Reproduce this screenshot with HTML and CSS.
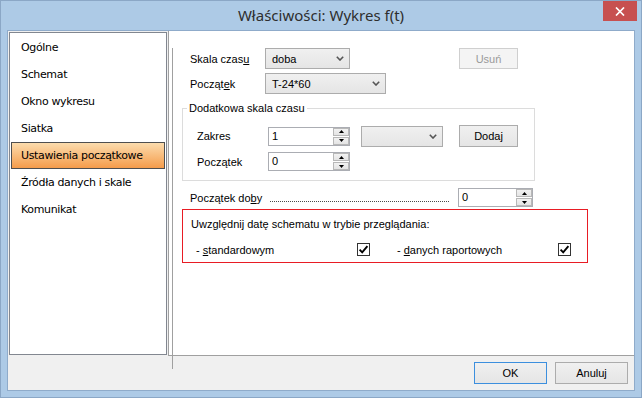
FILE: index.html
```html
<!DOCTYPE html>
<html lang="pl">
<head>
    <meta charset="UTF-8">
    <title>Właściwości: Wykres f(t)</title>
    <link rel="stylesheet" href="styles.css">
</head>
<body>
    <div class="window">
        <div class="titlebar">
            <span></span>
            <div class="title">Właściwości: Wykres f(t)</div>
            <div class="close-cell">
                <button class="close-button">
                    <svg width="10" height="9" viewBox="0 0 10 9"><path d="M1 0.5 L9 8.5 M9 0.5 L1 8.5" stroke="#fff" stroke-width="1.7" fill="none"/></svg>
                </button>
            </div>
        </div>

        <div class="client">
            <div class="main">
                <ul class="nav-list">
                    <li>Ogólne</li>
                    <li>Schemat</li>
                    <li>Okno wykresu</li>
                    <li>Siatka</li>
                    <li class="active">Ustawienia początkowe</li>
                    <li>Źródła danych i skale</li>
                    <li>Komunikat</li>
                </ul>

                <div class="page">
                    <div class="page-inner">
                        <div class="row row-first">
                            <span class="label">Skala czas<u>u</u></span>
                            <div class="combo combo-short">
                                <span>doba</span>
                                <svg width="8" height="5" viewBox="0 0 8 5"><path d="M0.8 0.8 L4 4 L7.2 0.8" stroke="#555" stroke-width="1.6" fill="none"/></svg>
                            </div>
                            <button class="btn btn-disabled btn-usun">Usuń</button>
                        </div>
                        <div class="row row-second">
                            <span class="label">Począt<u>e</u>k</span>
                            <div class="combo combo-long">
                                <span>T-24*60</span>
                                <svg width="8" height="5" viewBox="0 0 8 5"><path d="M0.8 0.8 L4 4 L7.2 0.8" stroke="#555" stroke-width="1.6" fill="none"/></svg>
                            </div>
                        </div>

                        <fieldset class="group">
                            <legend>Dodatkowa skala czasu</legend>
                            <div class="row group-row-first">
                                <span class="label label-group">Zakres</span>
                                <div class="spin spin-group">
                                    <span class="spin-value">1</span>
                                    <div class="spin-buttons">
                                        <div class="spin-up"><svg width="5" height="3" viewBox="0 0 5 3"><path d="M2.5 0 L5 3 L0 3 Z" fill="#000"/></svg></div>
                                        <div class="spin-down"><svg width="5" height="3" viewBox="0 0 5 3"><path d="M0 0 L5 0 L2.5 3 Z" fill="#000"/></svg></div>
                                    </div>
                                </div>
                                <div class="combo combo-empty">
                                    <span></span>
                                    <svg width="8" height="5" viewBox="0 0 8 5"><path d="M0.8 0.8 L4 4 L7.2 0.8" stroke="#555" stroke-width="1.6" fill="none"/></svg>
                                </div>
                                <button class="btn btn-dodaj">Dodaj</button>
                            </div>
                            <div class="row group-row-second">
                                <span class="label label-group">Początek</span>
                                <div class="spin spin-group">
                                    <span class="spin-value">0</span>
                                    <div class="spin-buttons">
                                        <div class="spin-up"><svg width="5" height="3" viewBox="0 0 5 3"><path d="M2.5 0 L5 3 L0 3 Z" fill="#000"/></svg></div>
                                        <div class="spin-down"><svg width="5" height="3" viewBox="0 0 5 3"><path d="M0 0 L5 0 L2.5 3 Z" fill="#000"/></svg></div>
                                    </div>
                                </div>
                            </div>
                        </fieldset>

                        <div class="row row-doba">
                            <span class="label label-doba">Początek do<u>b</u>y</span>
                            <div class="dots"></div>
                            <div class="spin spin-doba">
                                <span class="spin-value">0</span>
                                <div class="spin-buttons">
                                    <div class="spin-up"><svg width="5" height="3" viewBox="0 0 5 3"><path d="M2.5 0 L5 3 L0 3 Z" fill="#000"/></svg></div>
                                    <div class="spin-down"><svg width="5" height="3" viewBox="0 0 5 3"><path d="M0 0 L5 0 L2.5 3 Z" fill="#000"/></svg></div>
                                </div>
                            </div>
                        </div>

                        <div class="date-box">
                            <div class="date-title">Uwzględnij datę schematu w trybie przeglądania:</div>
                            <div class="date-row">
                                <span class="check-label">- <u>s</u>tandardowym</span>
                                <span class="checkbox">
                                    <svg width="11" height="11" viewBox="0 0 11 11"><path d="M1.6 5.6 L4.2 8.3 L9.4 2.2" stroke="#000" stroke-width="1.9" fill="none"/></svg>
                                </span>
                                <span class="check-label check-label-second">- <u>d</u>anych raportowych</span>
                                <span class="checkbox">
                                    <svg width="11" height="11" viewBox="0 0 11 11"><path d="M1.6 5.6 L4.2 8.3 L9.4 2.2" stroke="#000" stroke-width="1.9" fill="none"/></svg>
                                </span>
                            </div>
                        </div>
                    </div>
                </div>
            </div>

            <div class="footer">
                <button class="btn btn-footer btn-ok">OK</button>
                <button class="btn btn-footer">Anuluj</button>
            </div>
        </div>
    </div>
</body>
</html>
```

FILE: styles.css
```css
* {
    box-sizing: border-box;
}

body {
    margin: 0;
    width: 642px;
    height: 398px;
    overflow: hidden;
    font-family: "Liberation Sans", Arial, sans-serif;
    font-size: 11px;
    color: #000;
}

.window {
    width: 642px;
    height: 398px;
    display: flex;
    flex-direction: column;
    background-color: #adcae6;
    border: 1px solid #8ba7c6;
}

/* Barra de titulo */
.titlebar {
    height: 29px;
    display: grid;
    grid-template-columns: 1fr auto 1fr;
    flex-shrink: 0;
}

.title {
    font-family: "Noto Sans", "Open Sans", sans-serif;
    font-size: 15px;
    color: #2e2e2e;
    line-height: 28px;
    white-space: nowrap;
}

.close-cell {
    display: flex;
    justify-content: flex-end;
    align-items: flex-start;
    padding-right: 4px;
}

.close-button {
    width: 34px;
    height: 20px;
    border: none;
    padding: 0;
    background-color: #c75050;
    display: flex;
    align-items: center;
    justify-content: center;
}

/* Area cliente */
.client {
    flex: 1;
    margin: 0 6px 6px 6px;
    border: 1px solid #8fabca;
    background-color: #f0f0f0;
    display: flex;
    flex-direction: column;
}

.main {
    height: 325px;
    display: flex;
}

.nav-list {
    list-style: none;
    width: 158px;
    height: 323px;
    margin: 1px 1px 0 1px;
    padding: 1px 1px 0 1px;
    background-color: #fff;
    border: 1px solid #828790;
    font-family: "DejaVu Sans", Verdana, sans-serif;
    font-size: 11px;
    letter-spacing: -0.35px;
}

.nav-list li {
    height: 27px;
    line-height: 25px;
    padding-left: 9px;
    border: 1px solid transparent;
    white-space: nowrap;
}

.nav-list li.active {
    border-color: #4f4f4f;
    background: linear-gradient(#fcdcad, #f59c4b);
}

.page {
    flex: 1;
    height: 325px;
    background-color: #fff;
    border-left: 1px solid #a0a0a0;
    border-bottom: 1px solid #a0a0a0;
    padding: 0 0 3px 3px;
}

.page-inner {
    height: 321px;
    border-left: 1px solid #a0a0a0;
}

.row {
    display: flex;
    align-items: center;
}

.row-first {
    margin-top: 17px;
    height: 21px;
    padding-left: 17px;
}

.row-second {
    margin-top: 4px;
    height: 21px;
    padding-left: 17px;
}

.label {
    width: 75px;
    flex-shrink: 0;
    white-space: nowrap;
}

.label-group {
    width: 71px;
}

.label-doba {
    width: 80px;
}

.combo {
    height: 21px;
    border: 1px solid #acacac;
    background: linear-gradient(#f0f0f0, #e5e5e5);
    display: flex;
    align-items: center;
    justify-content: space-between;
    padding: 0 5px 0 6px;
}

.combo-short {
    width: 85px;
}

.combo-long {
    width: 121px;
}

.combo-empty {
    width: 82px;
    margin-left: 11px;
}

.btn {
    font-family: "Liberation Sans", Arial, sans-serif;
    font-size: 11px;
    color: #000;
    border: 1px solid #acacac;
    background: linear-gradient(#f0f0f0, #e5e5e5);
    padding: 0;
}

.btn-disabled {
    color: #9a9a9a;
    border-color: #cfcfcf;
    background: #f4f4f4;
}

.btn-usun {
    width: 59px;
    height: 21px;
    margin-left: 109px;
}

.btn-dodaj {
    width: 59px;
    height: 22px;
    margin-left: 16px;
}

/* Grupo */
.group {
    margin: 8px 0 0 9px;
    width: 353px;
    padding: 0 0 9px 0;
    border: 1px solid #dcdcdc;
    min-width: 0;
}

.group legend {
    margin-left: 4px;
    padding: 0 2px;
    line-height: 13px;
}

.group-row-first {
    margin-top: 10px;
    height: 22px;
    padding-left: 14px;
}

.group-row-second {
    margin-top: 5px;
    height: 19px;
    padding-left: 14px;
}

.spin {
    height: 19px;
    border: 1px solid #abadb3;
    background-color: #fff;
    display: flex;
}

.spin-group {
    width: 82px;
}

.spin-doba {
    width: 75px;
}

.spin-value {
    flex: 1;
    padding-left: 3px;
    line-height: 17px;
}

.spin-buttons {
    width: 17px;
    display: flex;
    flex-direction: column;
    gap: 1px;
    padding: 0 0 0 1px;
}

.spin-up,
.spin-down {
    flex: 1;
    background: linear-gradient(#f2f2f2, #e4e4e4);
    border: 1px solid #b8b8b8;
    display: flex;
    align-items: center;
    justify-content: center;
}

.row-doba {
    margin-top: 7px;
    height: 19px;
    padding-left: 17px;
}

.dots {
    width: 179px;
    height: 9px;
    border-bottom: 1px dotted #4a4a4a;
    margin-right: 9px;
}

/* Cuadro rojo */
.date-box {
    margin: 2px 0 0 9px;
    width: 406px;
    height: 54px;
    border: 1px solid #e81c24;
    padding: 8px 0 0 8px;
}

.date-title {
    line-height: 13px;
}

.date-row {
    display: flex;
    align-items: center;
    margin-top: 12px;
    height: 13px;
    padding-left: 5px;
}

.check-label {
    width: 161px;
    white-space: nowrap;
}

.check-label-second {
    margin-left: 27px;
}

.checkbox {
    width: 13px;
    height: 13px;
    border: 1px solid #333;
    background-color: #fff;
    display: flex;
    align-items: center;
    justify-content: center;
}

/* Botones inferiores */
.footer {
    flex: 1;
    display: flex;
    justify-content: flex-end;
    align-items: flex-start;
    gap: 8px;
    padding: 6px 6px 0 0;
}

.btn-footer {
    width: 73px;
    height: 22px;
}

.btn-ok {
    border-color: #3c8fde;
}
```
